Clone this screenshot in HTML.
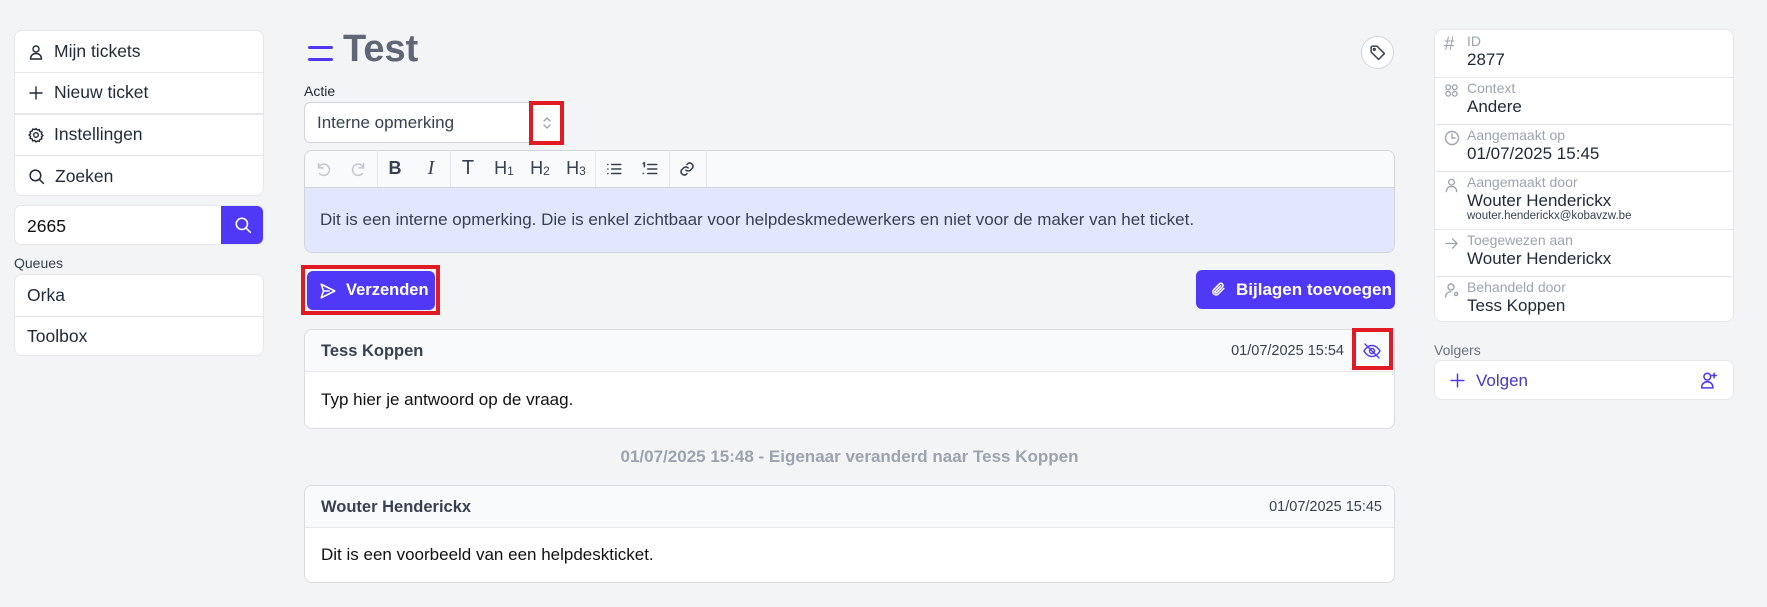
<!DOCTYPE html>
<html><head><meta charset="utf-8"><style>
*{box-sizing:border-box;margin:0;padding:0}
body{width:1767px;height:607px;background:#f3f4f6;font-family:"Liberation Sans",sans-serif;color:#1f2937;position:relative;overflow:hidden}
.a{position:absolute}
.card{position:absolute;background:#fff;border:1px solid #e5e7eb;border-radius:8px;overflow:hidden}
.row{position:absolute;left:0;right:0;display:flex;align-items:center;font-size:17.5px;color:#1f2937}
.row svg{margin-left:13px;margin-right:10px}
.hr{position:absolute;left:0;right:0;height:1px;background:#e5e7eb}
svg{fill:none;stroke:currentColor;stroke-width:1.4;stroke-linecap:round;stroke-linejoin:round}
.red{position:absolute;border:4px solid #e01b24}
.btn{position:absolute;background:#4f39f6;color:#fff;border-radius:6px;display:flex;align-items:center;font-weight:bold;font-size:16.5px}
.tb{position:absolute;top:150px;height:37px;display:flex;align-items:center;justify-content:center;width:30px;font-size:17px;color:#374151}
.dv{position:absolute;top:150px;height:37px;width:1px;background:#e5e7eb}
.lab{font-size:14px;color:#9ca3af;position:absolute;left:32px}
.val{font-size:17px;color:#1f2937;position:absolute;left:32px}
.ic{position:absolute;left:9px;color:#9ca3af}
</style></head><body>

<div class="card" style="left:14px;top:30px;width:250px;height:166px">
 <div class="row" style="top:0;height:41px"><svg width="16" height="16" viewBox="0 0 16 16"><circle cx="8" cy="5" r="3"/><path d="M2.5 15c0-3.5 2.5-5.5 5.5-5.5s5.5 2 5.5 5.5z"/></svg>Mijn tickets</div>
 <div class="hr" style="top:41px"></div>
 <div class="row" style="top:41px;height:41px"><svg width="16" height="16" viewBox="0 0 16 16"><path d="M8 2v12M2 8h12"/></svg>Nieuw ticket</div>
 <div class="hr" style="top:82px;height:2px"></div>
 <div class="row" style="top:83px;height:41px"><svg width="16" height="16" viewBox="0 0 16 16"><circle cx="8" cy="8" r="2.3"/><path d="M8 1.5l1.3 1.6 2-.5.6 2 2 .6-.5 2L15 8.5l-1.6 1.3.5 2-2 .6-.6 2-2-.5L8 15l-1.3-1.6-2 .5-.6-2-2-.6.5-2L1 8l1.6-1.3-.5-2 2-.6.6-2 2 .5z"/></svg>Instellingen</div>
 <div class="hr" style="top:124px"></div>
 <div class="row" style="top:124px;height:42px"><svg width="17" height="17" viewBox="0 0 16 16"><circle cx="7" cy="7" r="5"/><path d="M11 11l3.5 3.5"/></svg>Zoeken</div>
</div>
<div class="card" style="left:14px;top:205px;width:250px;height:40px;border-radius:7px">
 <div class="a" style="left:12px;top:10px;font-size:17.5px;color:#111">2665</div>
 <div class="a" style="left:206px;top:-1px;width:44px;height:40px;background:#4f39f6;display:flex;align-items:center;justify-content:center;color:#fff"><svg width="18" height="18" viewBox="0 0 16 16"><circle cx="7" cy="7" r="5"/><path d="M11 11l3.5 3.5"/></svg></div>
</div>
<div class="a" style="left:14px;top:255px;font-size:14px;color:#374151">Queues</div>
<div class="card" style="left:14px;top:274px;width:250px;height:82px">
 <div class="row" style="top:0;height:41px;padding-left:12px">Orka</div>
 <div class="hr" style="top:41px"></div>
 <div class="row" style="top:41px;height:41px;padding-left:12px">Toolbox</div>
</div>

<div class="a" style="left:308px;top:46px;width:25px;height:3px;background:#4f39f6;border-radius:2px"></div>
<div class="a" style="left:308px;top:58px;width:25px;height:3px;background:#4f39f6;border-radius:2px"></div>
<div class="a" style="left:343px;top:28px;font-size:38px;font-weight:bold;color:#5f6677">Test</div>
<div class="a" style="left:1361px;top:36px;width:33px;height:33px;border-radius:50%;background:#fff;border:1px solid #d1d5db;display:flex;align-items:center;justify-content:center;color:#374151"><svg width="17" height="17" viewBox="0 0 16 16"><path d="M2 3v4.5l7 7 5.5-5.5-7-7H3z"/><circle cx="5" cy="5" r="0.8"/></svg></div>

<div class="a" style="left:304px;top:83px;font-size:14px;color:#1f2937">Actie</div>
<div class="card" style="left:304px;top:102px;width:260px;height:41px;border-color:#d1d5db;border-radius:6px">
 <div class="a" style="left:12px;top:10px;font-size:17px;color:#374151">Interne opmerking</div>
 <svg class="a" style="left:236px;top:12px;color:#9ca3af" width="12" height="16" viewBox="0 0 12 16"><path d="M3 6l3-3 3 3M3 10l3 3 3-3"/></svg>
</div>
<div class="red" style="left:529px;top:101px;width:35px;height:44px"></div>

<div class="card" style="left:304px;top:150px;width:1091px;height:103px;border-color:#d1d5db">
 <div class="a" style="left:0;top:0;right:0;height:37px;background:#f9fafb;border-bottom:1px solid #d1d5db"></div>
 <div class="a" style="left:0;top:37px;right:0;bottom:0;background:#e0e7ff"></div>
 <div class="a" style="left:15px;top:59px;font-size:17px;color:#374151">Dit is een interne opmerking. Die is enkel zichtbaar voor helpdeskmedewerkers en niet voor de maker van het ticket.</div>
</div>
<div class="tb" style="left:308px;color:#c4c8d0"><svg width="18" height="18" viewBox="0 0 16 16"><path d="M4 3v4h4M4 7a5 5 0 1 1 1 5"/></svg></div>
<div class="tb" style="left:344px;color:#c4c8d0"><svg width="18" height="18" viewBox="0 0 16 16"><path d="M12 3v4H8M12 7a5 5 0 1 0-1 5"/></svg></div>
<div class="dv" style="left:377px"></div>
<div class="tb" style="left:380px;font-weight:bold;font-size:18px">B</div>
<div class="tb" style="left:416px;font-style:italic;font-family:'Liberation Serif',serif;font-size:20px">I</div>
<div class="dv" style="left:450px"></div>
<div class="tb" style="left:453px;font-size:20px">T</div>
<div class="tb" style="left:489px;font-size:18px">H<span style="font-size:12px;margin-top:5px">1</span></div>
<div class="tb" style="left:525px;font-size:18px">H<span style="font-size:12px;margin-top:5px">2</span></div>
<div class="tb" style="left:561px;font-size:18px">H<span style="font-size:12px;margin-top:5px">3</span></div>
<div class="dv" style="left:595px"></div>
<div class="tb" style="left:599px"><svg width="18" height="18" viewBox="0 0 16 16"><path d="M6 4h8M6 8h8M6 12h8M2.5 4h.1M2.5 8h.1M2.5 12h.1"/></svg></div>
<div class="tb" style="left:635px"><svg width="18" height="18" viewBox="0 0 16 16"><path d="M6 4h8M6 8h8M6 12h8M2 3l1-.5V6M2 12h.1"/></svg></div>
<div class="dv" style="left:669px"></div>
<div class="tb" style="left:672px"><svg width="18" height="18" viewBox="0 0 16 16"><path d="M7 9a3 3 0 0 0 4 0l2-2a3 3 0 0 0-4-4l-1 1M9 7a3 3 0 0 0-4 0l-2 2a3 3 0 0 0 4 4l1-1"/></svg></div>
<div class="dv" style="left:706px"></div>

<div class="btn" style="left:307px;top:271px;width:128px;height:39px"><svg style="margin-left:12px;margin-right:9px" width="18" height="18" viewBox="0 0 16 16"><path d="M2 2l12 6-12 6 2-6z M4 8h5"/></svg>Verzenden</div>
<div class="red" style="left:301px;top:265px;width:139px;height:50px"></div>
<div class="btn" style="left:1196px;top:270px;width:199px;height:39px;font-size:17px"><svg style="margin-left:14px;margin-right:9px" width="17" height="17" viewBox="0 0 16 16"><path d="M13 7l-5.5 5.5a3 3 0 0 1-4.2-4.2L9 2.6a2 2 0 0 1 2.8 2.8L6.2 11a1 1 0 0 1-1.4-1.4L10 4.5"/></svg>Bijlagen toevoegen</div>

<div class="card" style="left:304px;top:329px;width:1091px;height:100px;border-color:#d9dce1">
 <div class="a" style="left:0;top:0;right:0;height:42px;background:#f9fafb;border-bottom:1px solid #e5e7eb"></div>
 <div class="a" style="left:16px;top:12px;font-size:16.5px;font-weight:bold;color:#374151">Tess Koppen</div>
 <div class="a" style="right:50px;top:13px;font-size:14.5px;color:#374151">01/07/2025 15:54</div>
 <svg class="a" style="left:1057px;top:11px;color:#4f39f6" width="20" height="20" viewBox="0 0 20 20"><path d="M2 10s3-5.5 8-5.5S18 10 18 10s-3 5.5-8 5.5S2 10 2 10z"/><circle cx="10" cy="10" r="2.5"/><path d="M3 3l14 14"/></svg>
 <div class="a" style="left:16px;top:60px;font-size:17px;color:#111">Typ hier je antwoord op de vraag.</div>
</div>
<div class="red" style="left:1352px;top:328px;width:41px;height:42px"></div>

<div class="a" style="left:304px;width:1091px;top:447px;text-align:center;font-size:17px;font-weight:bold;color:#9ca3af">01/07/2025 15:48 - Eigenaar veranderd naar Tess Koppen</div>

<div class="card" style="left:304px;top:485px;width:1091px;height:98px;border-color:#d9dce1">
 <div class="a" style="left:0;top:0;right:0;height:42px;background:#f9fafb;border-bottom:1px solid #e5e7eb"></div>
 <div class="a" style="left:16px;top:12px;font-size:16.5px;font-weight:bold;color:#374151">Wouter Henderickx</div>
 <div class="a" style="right:12px;top:13px;font-size:14.5px;color:#374151">01/07/2025 15:45</div>
 <div class="a" style="left:16px;top:59px;font-size:17px;color:#111">Dit is een voorbeeld van een helpdeskticket.</div>
</div>

<div class="card" style="left:1434px;top:29px;width:300px;height:293px">
 <div class="a" style="left:0;right:0;top:0;height:47px">
  <div class="ic" style="top:4px;font-size:19px">#</div>
  <div class="lab" style="top:3px">ID</div><div class="val" style="top:20px">2877</div></div>
 <div class="hr" style="top:47px"></div>
 <div class="a" style="left:0;right:0;top:47px;height:47px">
  <svg class="ic" style="top:6px" width="15" height="15" viewBox="0 0 16 16"><circle cx="4.5" cy="4.5" r="2.5"/><circle cx="11.5" cy="4.5" r="2.5"/><circle cx="4.5" cy="11.5" r="2.5"/><circle cx="11.5" cy="11.5" r="2.5"/></svg>
  <div class="lab" style="top:3px">Context</div><div class="val" style="top:20px">Andere</div></div>
 <div class="hr" style="top:94px"></div>
 <div class="a" style="left:0;right:0;top:94px;height:47px">
  <svg class="ic" style="top:6px" width="16" height="16" viewBox="0 0 16 16"><circle cx="8" cy="8" r="6.5"/><path d="M8 4v4h3"/></svg>
  <div class="lab" style="top:3px">Aangemaakt op</div><div class="val" style="top:20px">01/07/2025 15:45</div></div>
 <div class="hr" style="top:141px"></div>
 <div class="a" style="left:0;right:0;top:141px;height:58px">
  <svg class="ic" style="top:6px" width="15" height="16" viewBox="0 0 16 16"><circle cx="8" cy="5" r="3"/><path d="M2.5 15c0-3.5 2.5-5.5 5.5-5.5s5.5 2 5.5 5.5"/></svg>
  <div class="lab" style="top:3px">Aangemaakt door</div><div class="val" style="top:20px">Wouter Henderickx</div>
  <div class="a" style="left:32px;top:39px;font-size:11.5px;color:#374151">wouter.henderickx@kobavzw.be</div></div>
 <div class="hr" style="top:199px"></div>
 <div class="a" style="left:0;right:0;top:199px;height:47px">
  <svg class="ic" style="top:7px" width="15" height="15" viewBox="0 0 16 16"><path d="M2 8h12M9 3l5 5-5 5"/></svg>
  <div class="lab" style="top:3px">Toegewezen aan</div><div class="val" style="top:20px">Wouter Henderickx</div></div>
 <div class="hr" style="top:246px"></div>
 <div class="a" style="left:0;right:0;top:246px;height:47px">
  <svg class="ic" style="top:6px" width="16" height="16" viewBox="0 0 16 16"><circle cx="7" cy="5" r="3"/><path d="M1.5 15c0-3 2-5 5-5.3"/><circle cx="12" cy="12" r="1.6"/></svg>
  <div class="lab" style="top:3px">Behandeld door</div><div class="val" style="top:20px">Tess Koppen</div></div>
</div>
<div class="a" style="left:1434px;top:342px;font-size:14px;color:#6b7280">Volgers</div>
<div class="card" style="left:1434px;top:360px;width:300px;height:40px">
 <svg class="a" style="left:14px;top:11px;color:#4f39f6" width="17" height="17" viewBox="0 0 16 16"><path d="M8 2v12M2 8h12"/></svg>
 <div class="a" style="left:41px;top:10px;font-size:17px;color:#4338ca">Volgen</div>
 <svg class="a" style="left:265px;top:10px;color:#4f39f6" width="18" height="18" viewBox="0 0 16 16"><circle cx="6.5" cy="5" r="3"/><path d="M1.5 15c0-3.5 2.3-5.5 5-5.5s5 2 5 5.5zM12.5 2v4M10.5 4h4"/></svg>
</div>
</body></html>
